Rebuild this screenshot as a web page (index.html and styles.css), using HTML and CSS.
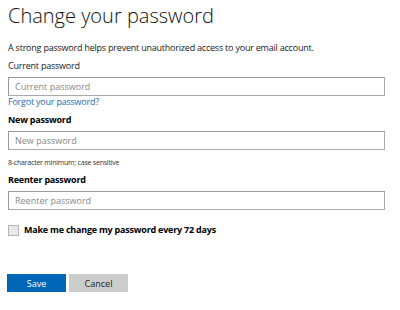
FILE: index.html
```html
<!DOCTYPE html>
<html lang="en">
<head>
<meta charset="utf-8">
<title>Change your password</title>
<link rel="stylesheet" href="styles.css">
</head>
<body>
<div class="page">
	<h1 class="title">Change your password</h1>
	<p class="intro">A strong password helps prevent unauthorized access to your email account.</p>

	<div class="field">
		<label class="lbl" for="cur">Current password</label>
		<input class="box" id="cur" type="password" placeholder="Current password">
		<a class="forgot" href="#nogo">Forgot your password?</a>
	</div>

	<div class="field">
		<label class="lbl strong" for="np">New password</label>
		<input class="box" id="np" type="password" placeholder="New password">
		<div class="hint">8-character minimum; case sensitive</div>
	</div>

	<div class="field">
		<label class="lbl strong" for="rp">Reenter password</label>
		<input class="box" id="rp" type="password" placeholder="Reenter password">
	</div>

	<label class="check"><span class="tick"></span>Make me change my password every 72 days</label>

	<div class="buttons">
		<button class="btn save">Save</button>
		<button class="btn cancel">Cancel</button>
	</div>
</div>
</body>
</html>
```

FILE: styles.css
```css
*{margin:0;padding:0;box-sizing:border-box;}
body{background:#fff;color:#000;font-family:"Open Sans","Liberation Sans",sans-serif;font-size:9px;letter-spacing:-0.22px;}
.page{padding:2px 0 0 8px;width:386px;}
.title{font-size:20px;font-weight:300;line-height:28px;letter-spacing:0;color:#111;}
.intro{margin-top:12px;line-height:12px;color:#1a1a1a;}
.field{margin-top:6px;}
.lbl{display:block;line-height:12px;color:#1a1a1a;}
.lbl.strong{font-weight:700;color:#000;margin-top:1px;}
.box{display:block;width:377px;height:19px;margin-top:5px;border:1px solid #999;border-right-color:#aaa;border-bottom-color:#aaa;padding:0 6px;font:inherit;outline:none;}
.box::placeholder{color:#888;}
.forgot{display:block;line-height:12px;color:#2b6cb0;text-decoration:none;}
.hint{margin-top:8px;font-size:7px;line-height:10px;color:#333;}
.field:last-of-type .lbl{margin-top:0;}
.field:last-of-type .box{margin-top:6px;}
.check{display:flex;align-items:center;gap:5px;margin-top:14px;font-weight:700;line-height:12px;}
.tick{display:block;width:11px;height:11px;border:1px solid #b5b5b5;background:#e8e8e8;}
.buttons{display:flex;gap:3px;margin-top:38px;margin-left:-1px;}
.btn{width:59px;height:18px;border:0;font:inherit;}
.save{background:#0067b8;color:#fff;}
.cancel{background:#ccc;color:#222;}
```
